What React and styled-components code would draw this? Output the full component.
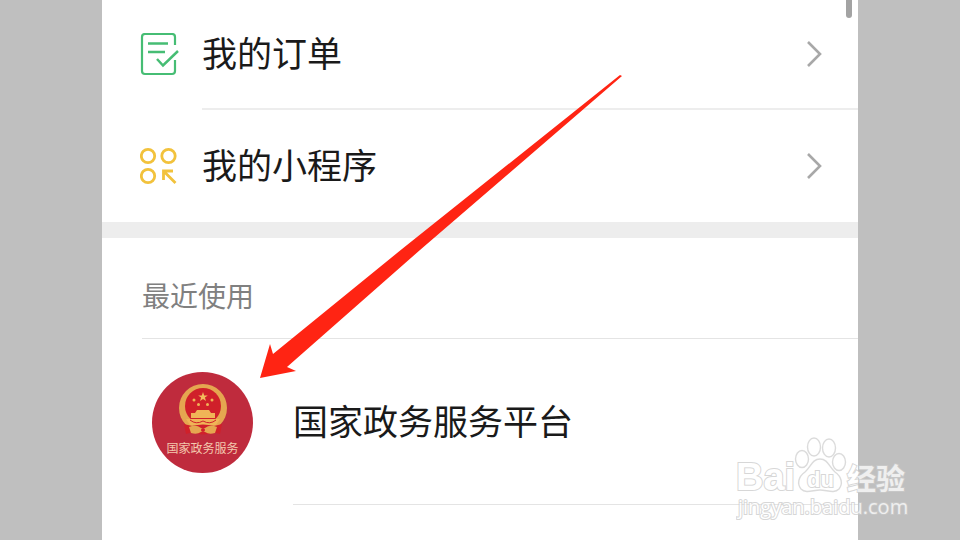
import styled, { createGlobalStyle } from "styled-components";

const App = () => {
  return (
    <Page>
      <GlobalStyle />
      <Screen>
        <ScrollThumb />
        <nav>
          <MenuRow href="#orders">
            <OrderIcon />
            <MenuBody $line>
              <Title>我的订单</Title>
              <Chevron />
            </MenuBody>
          </MenuRow>
          <MenuRow href="#programs">
            <ProgramIcon />
            <MenuBody>
              <Title>我的小程序</Title>
              <Chevron />
            </MenuBody>
          </MenuRow>
        </nav>
        <Recent>
          <RecentTitle>最近使用</RecentTitle>
          <AppRow href="#gov">
            <Avatar>
              <Emblem />
              <AvatarName>国家政务服务</AvatarName>
            </Avatar>
            <AppBody>
              <Title>国家政务服务平台</Title>
            </AppBody>
          </AppRow>
        </Recent>
        <Arrow viewBox="0 0 364 306" aria-hidden="true">
          <path
            d="M1 304L11 270L14 280L143 175L361 1L363 2L161 176L28 293L37 297Z"
            fill="#ff2413"
          />
        </Arrow>
      </Screen>
      <Watermark />
    </Page>
  );
};

const OrderIcon = () => (
  <Icon viewBox="0 0 40 44" fill="none" stroke="#46bd74" strokeWidth="2.2">
    <path d="M35 12V4Q35 1 32 1H5Q2 1 2 4V38Q2 41 5 41H32Q35 41 35 38V27" />
    <path d="M8 10.500H28M8 19H25M17 26L23 32.500L38 18" strokeWidth="2.5" />
  </Icon>
);

const ProgramIcon = () => (
  <Icon viewBox="0 0 40 44" fill="none" stroke="#f2c23c" strokeWidth="2.8">
    <circle cx="8" cy="12" r="6.700" />
    <circle cx="28.500" cy="12" r="6.700" />
    <circle cx="8" cy="32" r="6.700" />
    <path d="M35.500 39L24 27.500M23.500 36V27H33" />
  </Icon>
);

const Chevron = () => (
  <ChevronIcon viewBox="0 0 16 28" fill="none" stroke="#a8a8a8">
    <path d="M2 2L14 14L2 26" strokeWidth="2.6" />
  </ChevronIcon>
);

const Emblem = () => (
  <EmblemIcon viewBox="0 0 50 52">
    <circle cx="25" cy="24" r="24" fill="#e5a650" />
    <circle cx="25" cy="22" r="18" fill="#d0202a" />
    <path
      d="M25 8l1.200 3.400h3.600l-2.900 2.200 1.100 3.500-3-2.100-3 2.100 1.100-3.500-2.900-2.200h3.600z"
      fill="#f3bd5c"
    />
    <g fill="#f0b457">
      <circle cx="16" cy="16" r="1.500" />
      <circle cx="34" cy="16" r="1.500" />
      <circle cx="20.500" cy="20.500" r="1.500" />
      <circle cx="29.500" cy="20.500" r="1.500" />
      <path d="M19 26H31L33 29H37V34H13V29H17Z" />
      <path d="M8 35H42L38 41H12Z" />
    </g>
    <path d="M12 36Q18 41 25 37Q32 41 38 36" fill="none" stroke="#d0202a" />
    <path
      d="M6 40L14 42Q25 39 36 42L44 40L42 50L35 48Q25 53 15 48L8 50Z"
      fill="#d0202a"
    />
    <path
      d="M11 43Q18 40 23 44H27Q32 40 39 43L37 49Q31 51 27 48H23Q19 51 13 49Z"
      fill="#e5a650"
    />
    <circle cx="25" cy="46" r="2" fill="#d0202a" />
  </EmblemIcon>
);

const Watermark = () => (
  <Mark viewBox="0 0 176 90" aria-hidden="true">
    <g fill="#fff" stroke="#d0d0d0" strokeWidth="1.4">
      <ellipse cx="66" cy="29" rx="6.500" ry="8.500" />
      <ellipse cx="78" cy="17" rx="6.500" ry="9" />
      <ellipse cx="93" cy="18" rx="6.500" ry="9" />
      <ellipse cx="103" cy="32" rx="6.500" ry="8.500" />
      <path d="M84 29C92 29 93 37 99 42C106 47 107 54 103 59C98 64 91 60 84 60C77 60 70 64 65 59C61 54 62 47 69 42C75 37 76 29 84 29Z" />
    </g>
    <LogoText x="0" y="60" $size={38}>
      Bai
    </LogoText>
    <LogoText x="71" y="57" $size={22}>
      du
    </LogoText>
    <LogoText x="111" y="60" $size={29}>
      经验
    </LogoText>
    <UrlText x="2" y="84">
      jingyan.baidu.com
    </UrlText>
  </Mark>
);

const GlobalStyle = createGlobalStyle`
  * {
    box-sizing: border-box;
  }
  body {
    margin: 0;
    background-color: #bfbfbf;
    font-family: "Noto Sans CJK SC", "Noto Sans", sans-serif;
  }
`;

const Page = styled.div`
  position: relative;
  min-height: 100vh;
  display: flex;
  justify-content: center;
  overflow: hidden;
`;

const Screen = styled.main`
  position: relative;
  flex: 1;
  max-width: 756px;
  background-color: #fff;
`;

const ScrollThumb = styled.div`
  position: absolute;
  top: 0;
  right: 6px;
  width: 6px;
  height: 18px;
  border-radius: 0 0 3px 3px;
  background-color: #a3a3a3;
`;

const MenuRow = styled.a`
  display: flex;
  align-items: center;
  gap: 22px;
  padding-left: 38px;
  color: #1a1a1a;
  text-decoration: none;
`;

const MenuBody = styled.div`
  flex: 1;
  display: flex;
  align-items: center;
  justify-content: space-between;
  height: ${({ $line }) => ($line ? 110 : 112)}px;
  padding-right: 36px;
  border-bottom: ${({ $line }) => ($line ? "2px solid #ededed" : "none")};
`;

const Title = styled.span`
  padding-bottom: 4px;
  font-size: 35px;
  line-height: 48px;
`;

const Icon = styled.svg`
  width: 40px;
  height: 44px;
`;

const ChevronIcon = styled.svg`
  width: 16px;
  height: 28px;
`;

const Recent = styled.section`
  border-top: 16px solid #ededed;
`;

const RecentTitle = styled.h2`
  margin: 0 0 0 40px;
  padding: 37px 0 23px;
  border-bottom: 1px solid #e4e4e4;
  color: #808080;
  font-size: 28px;
  font-weight: 400;
  line-height: 40px;
`;

const AppRow = styled.a`
  display: flex;
  align-items: center;
  gap: 40px;
  padding-left: 50px;
  color: #1a1a1a;
  text-decoration: none;
`;

const AppBody = styled.div`
  flex: 1;
  display: flex;
  align-items: center;
  height: 166px;
  border-bottom: 1px solid #e4e4e4;
`;

const Avatar = styled.div`
  display: flex;
  flex-direction: column;
  align-items: center;
  width: 101px;
  height: 101px;
  padding-top: 12px;
  border-radius: 50%;
  background-color: #bf2b3d;
`;

const EmblemIcon = styled.svg`
  width: 50px;
  height: 52px;
`;

const AvatarName = styled.span`
  margin-top: 4px;
  color: #f3c9ae;
  font-size: 12px;
  line-height: 16px;
  white-space: nowrap;
`;

const Arrow = styled.svg`
  position: absolute;
  top: 74px;
  left: 157px;
  width: 364px;
  height: 306px;
  pointer-events: none;
`;

const Mark = styled.svg`
  position: absolute;
  right: 48px;
  bottom: 20px;
  width: 176px;
  height: 90px;
  opacity: 0.75;
  pointer-events: none;
`;

const MarkText = styled.text`
  fill: #fff;
  stroke: #cacaca;
  stroke-width: 2px;
  paint-order: stroke;
`;

const LogoText = styled(MarkText)`
  font-family: "Liberation Sans", "Noto Sans CJK SC", sans-serif;
  font-size: ${({ $size }) => $size}px;
  font-weight: 700;
`;

const UrlText = styled(MarkText)`
  font-family: "Open Sans", "Noto Sans", sans-serif;
  font-size: 20px;
`;

export default App;
